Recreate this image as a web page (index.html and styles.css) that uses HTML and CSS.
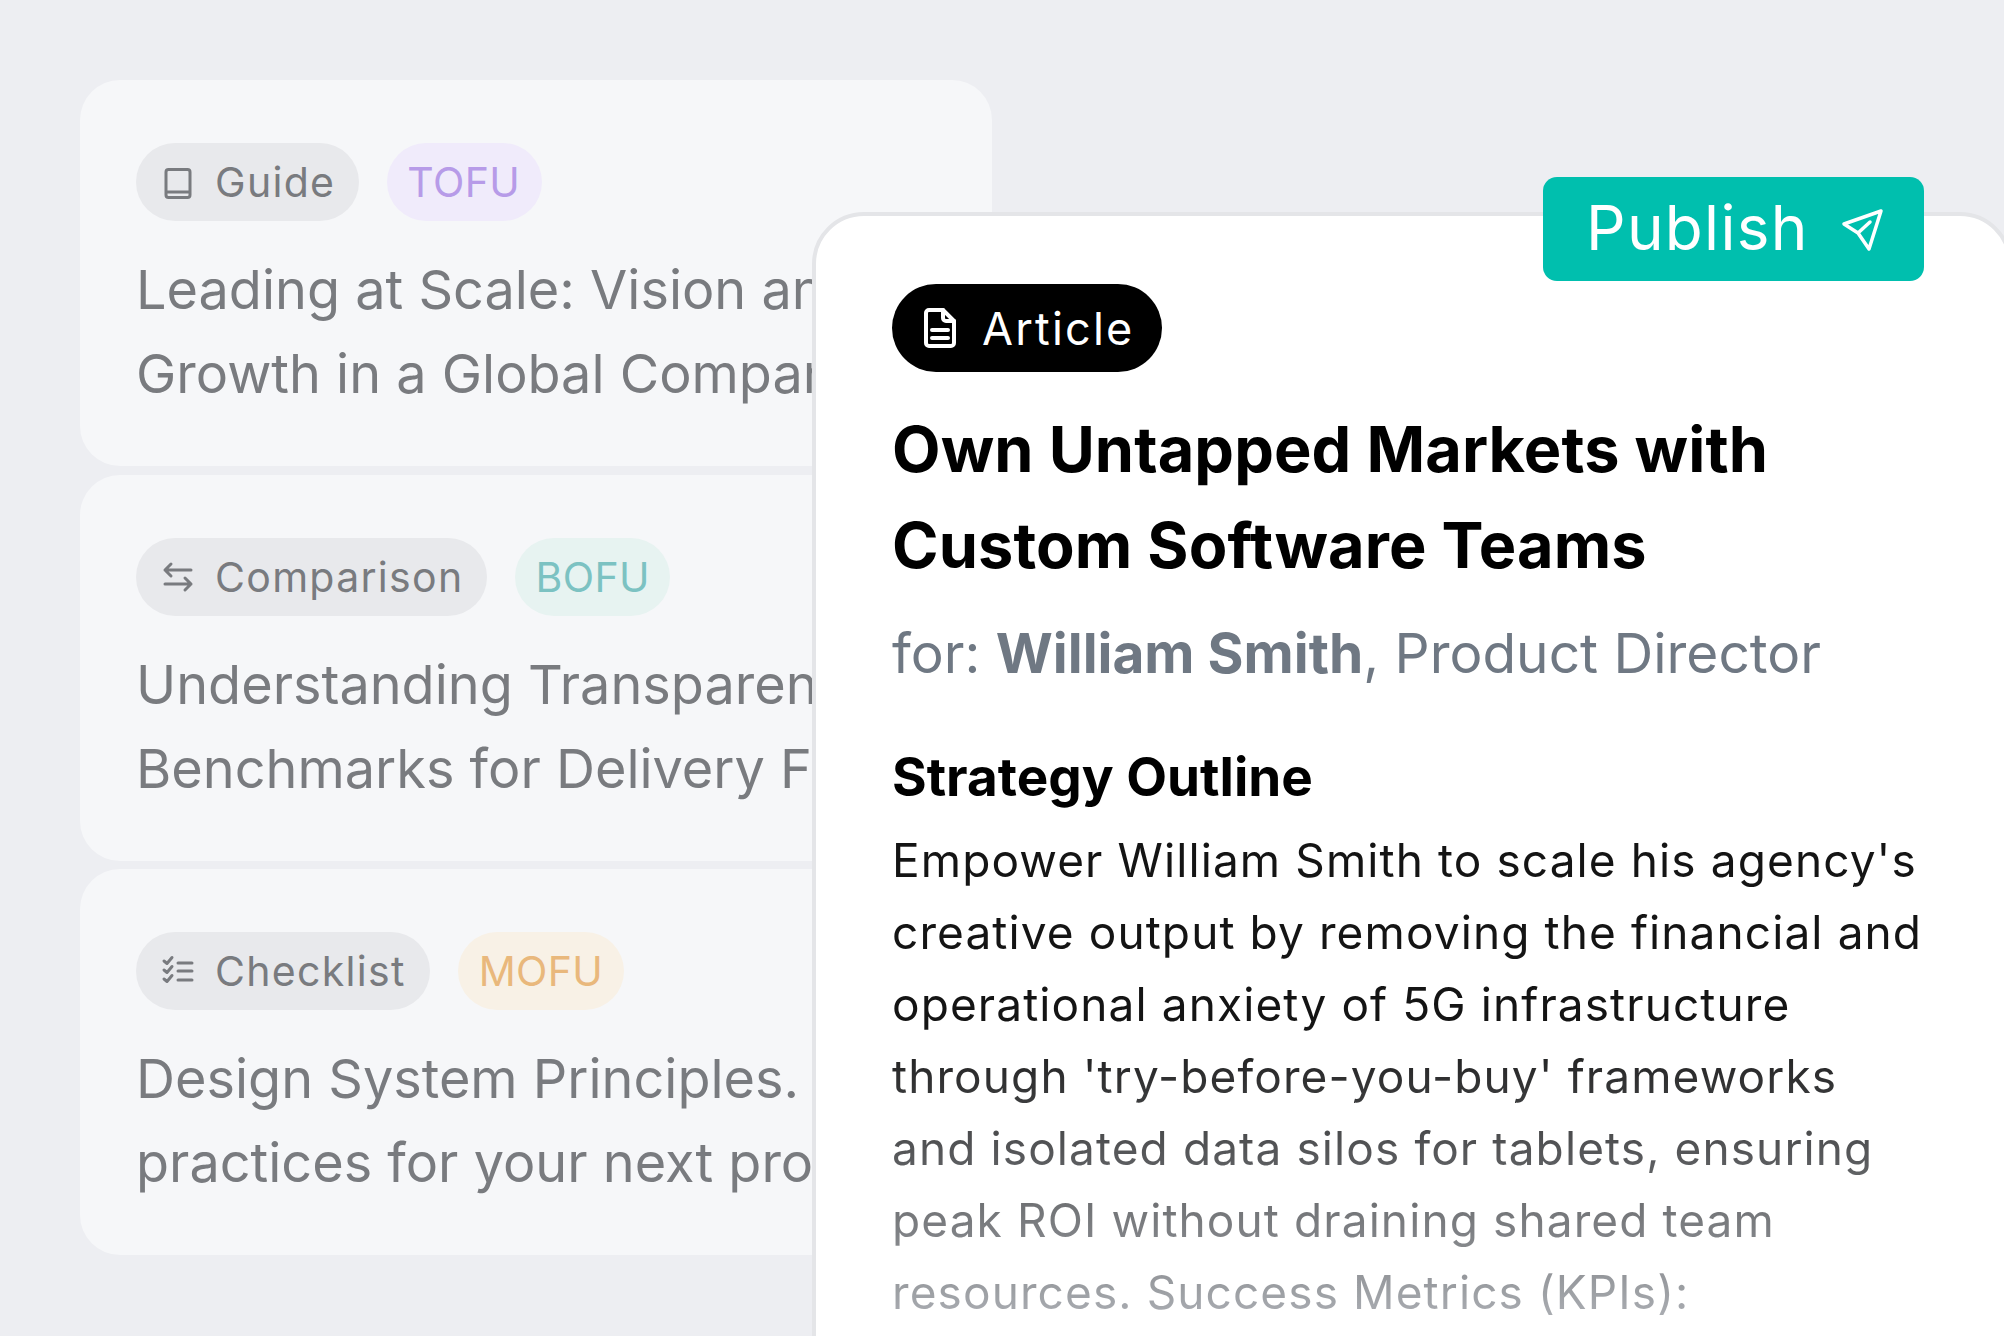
FILE: index.html
```html
<!DOCTYPE html>
<html>
<head>
  <link rel="stylesheet" href="styles.css">
</head>
<body>
  <div class="stage">
    <div class="cards">
      <div class="card">
        <div class="tags">
          <span class="tag"><svg class="tag-icon" viewBox="0 0 36 36"><path d="M8.500 5.500h19a2.500 2.500 0 0 1 2.500 2.500v23a2.500 2.500 0 0 1-2.500 2.500h-19a2.500 2.500 0 0 1-2.500-2.500V8a2.500 2.500 0 0 1 2.500-2.500zM6 28h24"/></svg>Guide</span>
          <span class="tag tofu">TOFU</span>
        </div>
        <p class="card-text">Leading at Scale: Vision and<br>Growth in a Global Company</p>
      </div>
      <div class="card">
        <div class="tags">
          <span class="tag"><svg class="tag-icon" viewBox="0 0 36 36"><path d="M31 11H5M11 5l-6 6 6 6M5 25h26M25 19l6 6-6 6"/></svg>Comparison</span>
          <span class="tag bofu">BOFU</span>
        </div>
        <p class="card-text">Understanding Transparent<br>Benchmarks for Delivery Fees</p>
      </div>
      <div class="card">
        <div class="tags">
          <span class="tag"><svg class="tag-icon" viewBox="0 0 36 36"><path d="M18 10h14M18 18h14M18 27h14M4 8l3 2.500 5-6M4 17l3 2.500 5-6M4 26l3 2.500 5-6"/></svg>Checklist</span>
          <span class="tag mofu">MOFU</span>
        </div>
        <p class="card-text">Design System Principles. Best<br>practices for your next project</p>
      </div>
    </div>

    <div class="panel">
      <span class="badge"><svg class="badge-icon" viewBox="0 0 40 44"><path d="M9 4h14l11 11v22a3 3 0 0 1-3 3H9a3 3 0 0 1-3-3V7a3 3 0 0 1 3-3z"/><path d="M23 4v8a3 3 0 0 0 3 3h8M12 24h16M12 32h16"/></svg>Article</span>
      <h1 class="title">Own Untapped Markets with<br>Custom Software Teams</h1>
      <p class="for-line">for: <b>William Smith</b>, Product Director</p>
      <h2 class="outline">Strategy Outline</h2>
      <p class="body-text">Empower William Smith to scale his agency's<br>creative output by removing the financial and<br>operational anxiety of 5G infrastructure<br>through 'try-before-you-buy' frameworks<br>and isolated data silos for tablets, ensuring<br>peak ROI without draining shared team<br>resources. Success Metrics (KPIs):</p>
    </div>

    <div class="publish">Publish<svg class="publish-icon" viewBox="0 0 48 48"><path d="M43 6 6 19l14 9 11 16zM20 28l12-11"/></svg></div>
  </div>
</body>
</html>
```

FILE: styles.css
```css
* { box-sizing: border-box; }
html, body { margin: 0; height: 100%; }
body { background: #edeef2; font-family: "Inter", "Noto Sans", sans-serif; overflow: hidden; }

.stage { position: relative; width: 2004px; height: 1336px; overflow: hidden; }

.cards { display: flex; flex-direction: column; gap: 8.500px; padding: 80px 0 0 80px; width: 992px; }
.card { height: 386px; background: #f6f7f9; border-radius: 40px; padding: 63px 56px 0; overflow: hidden; }

.tags { display: flex; gap: 28px; }
.tag { display: inline-flex; align-items: center; height: 78px; padding: 0 24px; border-radius: 39px; background: #e8e9ec; color: #797b7f; font-size: 41px; letter-spacing: 1.300px; white-space: nowrap; }
.tag-icon { width: 36px; height: 36px; margin-right: 19px; fill: none; stroke: #797b7f; stroke-width: 3; stroke-linecap: round; stroke-linejoin: round; }
.tofu { background: #f0ebfb; color: #b79be8; padding: 0 22px 0 20px; letter-spacing: 0.400px; }
.bofu { background: #e7f3f1; color: #7cc2c2; padding: 0 20px; letter-spacing: 0.400px; }
.mofu { background: #f8f1e6; color: #e9b87c; padding: 0 21px; letter-spacing: 0.300px; }

.card-text { margin: 27px 0 0; font-size: 54px; line-height: 84px; color: #797b7f; white-space: nowrap; }

.panel { position: absolute; left: 812px; top: 212px; width: 1200px; height: 1200px; background: #fff; border: 4px solid #e4e5e8; border-radius: 52px; padding: 68px 0 0 76px; }
.badge { display: inline-flex; align-items: center; height: 88px; padding: 0 27px 0 28px; border-radius: 44px; background: #000; color: #fff; font-size: 45px; letter-spacing: 2.200px; }
.badge-icon { width: 40px; height: 44px; margin-right: 22px; fill: none; stroke: #fff; stroke-width: 4; stroke-linecap: round; stroke-linejoin: round; }

.title { margin: 29px 0 0; font-size: 63px; line-height: 96px; font-weight: 700; color: #000; letter-spacing: 0.100px; white-space: nowrap; }
.for-line { margin: 20px 0 0; font-size: 55px; line-height: 80px; color: #6f7883; white-space: nowrap; }
.for-line b { font-weight: 700; }
.outline { margin: 48px 0 0; font-size: 53px; line-height: 72px; font-weight: 700; color: #000; }
.body-text { margin: 11px 0 0; font-size: 46px; line-height: 72px; letter-spacing: 1.100px; white-space: nowrap; background: linear-gradient(#141414 40%, #b0b3b8 100%); background-size: 100% 504px; background-repeat: no-repeat; -webkit-background-clip: text; background-clip: text; color: transparent; }

.publish { position: absolute; left: 1543px; top: 177px; width: 381px; height: 104px; background: #00bfae; border-radius: 14px; color: #fff; font-size: 62px; letter-spacing: 1.300px; display: flex; align-items: center; padding: 0 0 4px 43px; }
.publish-icon { width: 48px; height: 48px; margin: 4px 0 0 29px; fill: none; stroke: #fff; stroke-width: 3.500; stroke-linecap: round; stroke-linejoin: round; }
```
